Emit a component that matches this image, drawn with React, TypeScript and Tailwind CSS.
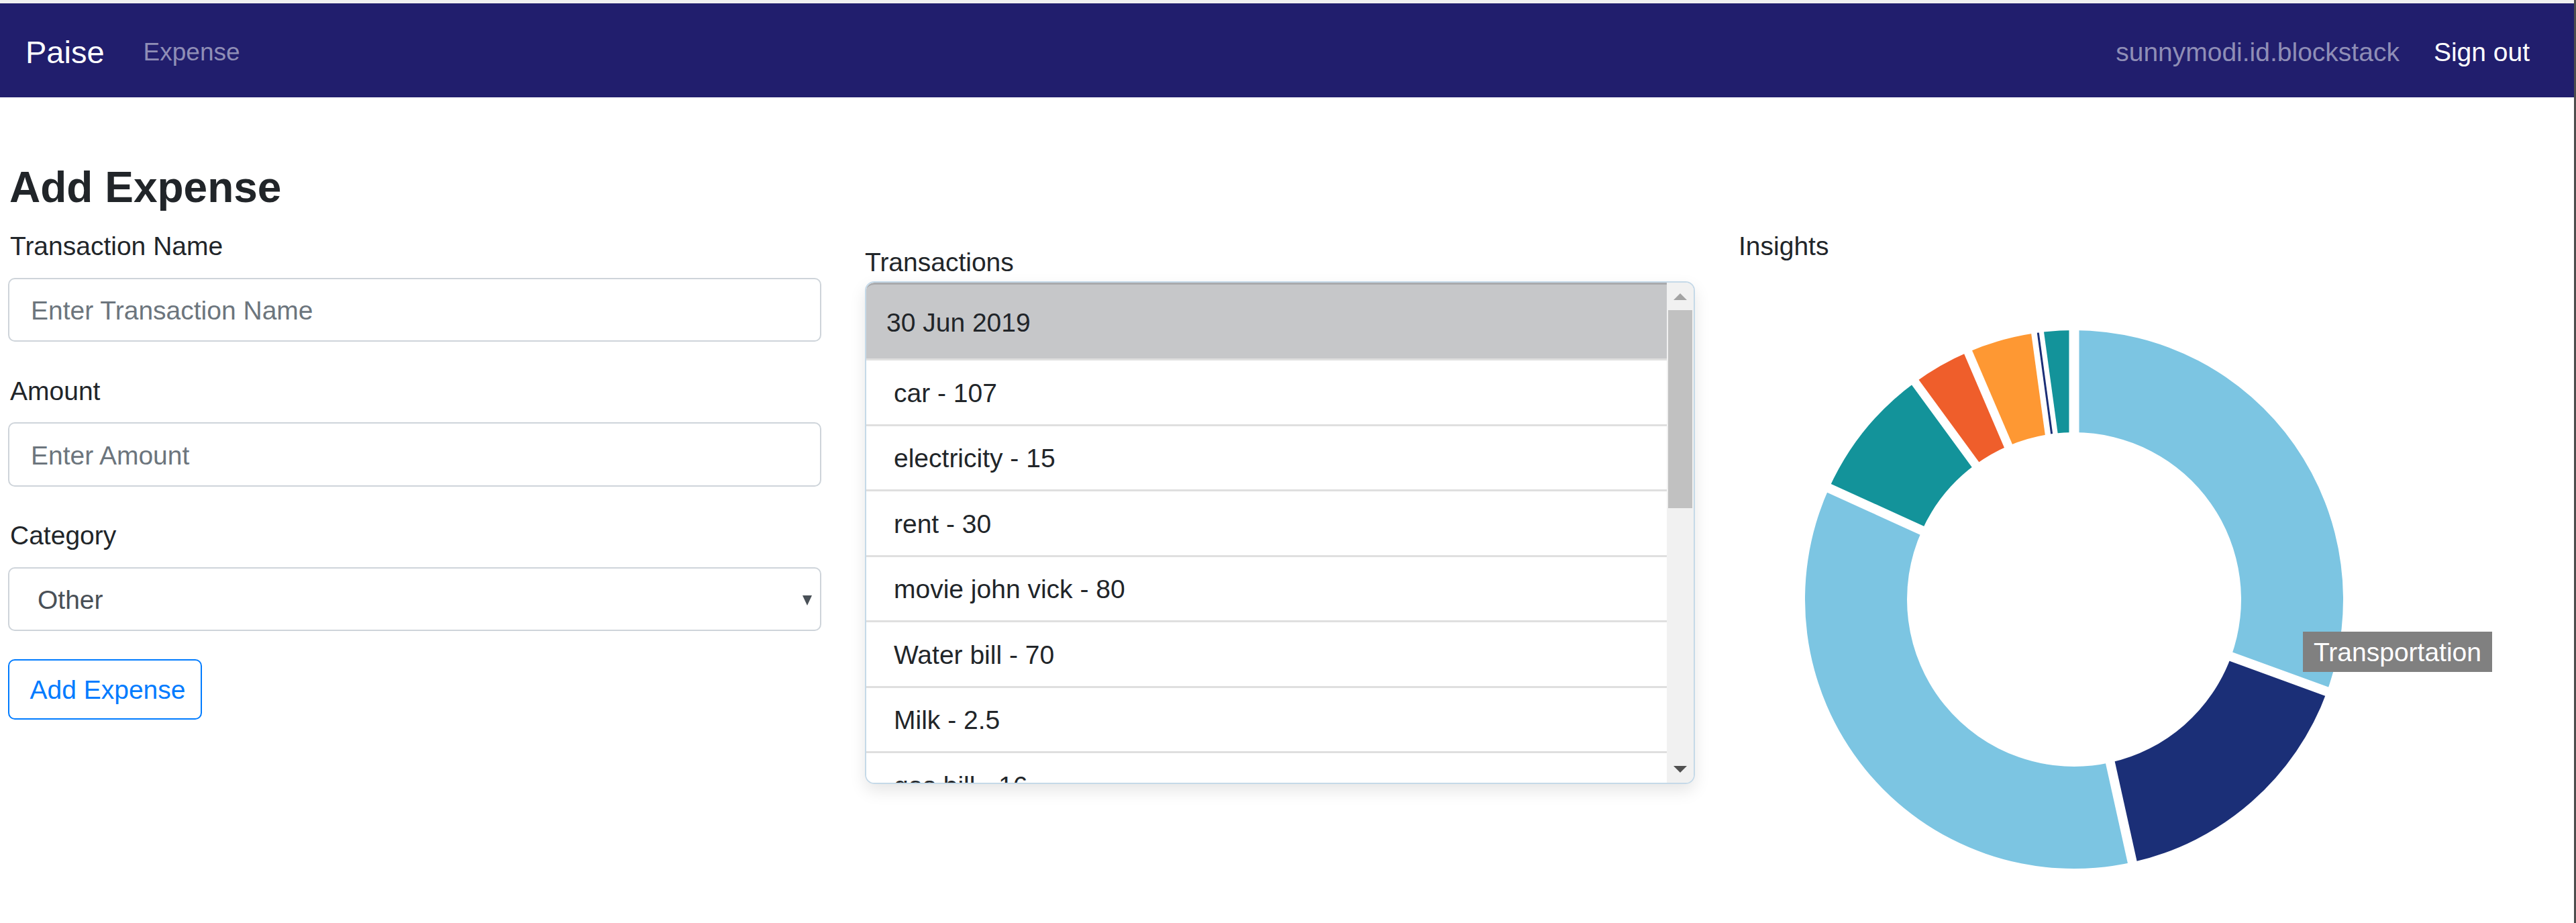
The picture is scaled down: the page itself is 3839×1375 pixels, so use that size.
import React from 'react';

const transactions = [
  'car - 107',
  'electricity - 15',
  'rent - 30',
  'movie john vick - 80',
  'Water bill - 70',
  'Milk - 2.5',
  'gas bill - 16',
];

// degrees, clockwise from 12 o'clock
const slices = [
  { from: 0, to: 110.0, color: '#7cc5e2' },
  { from: 110.0, to: 167.5, color: '#1b2f77' },
  { from: 167.5, to: 294.4, color: '#7cc5e2' },
  { from: 294.4, to: 323.8, color: '#13939a' },
  { from: 323.8, to: 336.8, color: '#ef5e2b' },
  { from: 336.8, to: 351.4, color: '#fe9833' },
  { from: 351.4, to: 353.0, color: '#1b2f77' },
  { from: 353.0, to: 360, color: '#13939a' },
];

const gaps = [
  { at: 0, w: 15 },
  { at: 110.0, w: 14 },
  { at: 167.5, w: 14 },
  { at: 294.4, w: 14 },
  { at: 323.8, w: 13 },
  { at: 336.8, w: 13 },
  { at: 352.2, w: 19 },
];

const C = 410;
const R = 401;
const r = 249;

function pt(angle: number, radius: number) {
  const a = ((angle - 90) * Math.PI) / 180;
  return [C + radius * Math.cos(a), C + radius * Math.sin(a)];
}

function arcPath(from: number, to: number) {
  const large = to - from > 180 ? 1 : 0;
  const [x1, y1] = pt(from, R);
  const [x2, y2] = pt(to, R);
  const [x3, y3] = pt(to, r);
  const [x4, y4] = pt(from, r);
  return `M${x1} ${y1} A${R} ${R} 0 ${large} 1 ${x2} ${y2} L${x3} ${y3} A${r} ${r} 0 ${large} 0 ${x4} ${y4} Z`;
}

function Doughnut() {
  return (
    <svg width={820} height={820} viewBox="0 0 820 820">
      {slices.map((s, i) => (
        <path key={i} d={arcPath(s.from, s.to)} fill={s.color} />
      ))}
      {gaps.map((g, i) => {
        const [x1, y1] = pt(g.at, r - 10);
        const [x2, y2] = pt(g.at, R + 10);
        return <line key={i} x1={x1} y1={y1} x2={x2} y2={y2} stroke="#ffffff" strokeWidth={g.w} />;
      })}
      {(() => {
        const [x1, y1] = pt(352.3, r);
        const [x2, y2] = pt(352.3, R);
        return <line x1={x1} y1={y1} x2={x2} y2={y2} stroke="#1b2f77" strokeWidth={3} />;
      })()}
    </svg>
  );
}

export default function App() {
  return (
    <div className="flex h-[1375px] w-full overflow-hidden bg-white font-['Liberation_Sans',Arial,sans-serif] text-[#212529]">
      <div className="flex min-w-0 flex-1 flex-col">
        <div className="h-[5px] bg-[#f0f0f0]" />
        <nav className="flex h-[140px] items-center bg-[#211e6d] pl-[38px] pr-[66px] pt-[5px]">
          <span className="text-[47px] leading-none text-white">Paise</span>
          <span className="ml-[58px] text-[37px] leading-none text-[#8f8eb6]">Expense</span>
          <div className="ml-auto flex items-center gap-[51px]">
            <span className="text-[39px] leading-none text-[#8f8eb6]">sunnymodi.id.blockstack</span>
            <span className="text-[39px] leading-none text-white">Sign out</span>
          </div>
        </nav>

        <div className="grid grid-cols-[1212px_1237px_1fr] gap-x-[65px] pl-[12px]">
          {/* form column */}
          <div className="flex flex-col">
            <h1 className="mt-[95px] pl-[2px] text-[64px] font-semibold leading-[79px] text-[#212529]">
              Add Expense
            </h1>
            <label className="mt-[19px] pl-[3px] text-[39px] leading-[58px]">Transaction Name</label>
            <input
              className="mt-[18px] h-[95px] w-full rounded-[10px] border-[2.5px] border-[#ced4da] px-[32px] pt-[3px] text-[39px] text-[#495057] outline-none placeholder:text-[#6c757d]"
              placeholder="Enter Transaction Name"
            />
            <label className="mt-[45px] pl-[3px] text-[39px] leading-[58px]">Amount</label>
            <input
              className="mt-[17px] h-[96px] w-full rounded-[10px] border-[2.5px] border-[#ced4da] px-[32px] pt-[3px] text-[39px] text-[#495057] outline-none placeholder:text-[#6c757d]"
              placeholder="Enter Amount"
            />
            <label className="mt-[44px] pl-[3px] text-[39px] leading-[58px]">Category</label>
            <div className="mt-[18px] flex h-[95px] w-full items-center rounded-[10px] border-[2.5px] border-[#ced4da] pl-[42px] pr-[12px] pt-[3px] text-[39px] text-[#495057]">
              <span>Other</span>
              <span className="ml-auto h-0 w-0 border-x-[7px] border-t-[15px] border-x-transparent border-t-[#495057]" />
            </div>
            <button className="mt-[42px] h-[90px] w-[289px] rounded-[10px] border-[2.5px] border-[#007bff] pl-[8px] pt-[3px] text-[39px] text-[#007bff]">
              Add Expense
            </button>
          </div>

          {/* transactions column */}
          <div className="flex flex-col pt-[218px]">
            <div className="text-[39px] leading-[56px]">Transactions</div>
            <div className="flex h-[749px] w-full overflow-hidden rounded-[14px] border-2 border-[#c5d9e8] shadow-[0_10px_24px_rgba(0,0,0,0.10)]">
              <div className="flex min-w-0 flex-1 flex-col overflow-hidden">
                <div className="flex h-[113px] shrink-0 items-center rounded-tl-[12px] border-t-[3px] border-[#a9aaac] bg-[#c6c7c9] pl-[30px] pt-[4px] text-[39px]">
                  30 Jun 2019
                </div>
                {transactions.map((t) => (
                  <div
                    key={t}
                    className="flex h-[97.5px] shrink-0 items-center border-t-[3px] border-[#dfdfdf] bg-white pl-[41px] pt-[3px] text-[39px]"
                  >
                    {t}
                  </div>
                ))}
              </div>
              <div className="flex w-[40px] shrink-0 flex-col bg-[#f1f1f1]">
                <div className="flex h-[41px] items-center justify-center">
                  <span className="h-0 w-0 border-x-[10px] border-b-[10px] border-x-transparent border-b-[#a3a3a3]" />
                </div>
                <div className="mx-[2px] h-[295px] bg-[#c1c1c1]" />
                <div className="flex-1" />
                <div className="flex h-[41px] items-center justify-center">
                  <span className="h-0 w-0 border-x-[10px] border-t-[10px] border-x-transparent border-t-[#505050]" />
                </div>
              </div>
            </div>
          </div>

          {/* insights column */}
          <div className="flex flex-col pt-[193px]">
            <div className="text-[39px] leading-[58px]">Insights</div>
            <div className="relative ml-[90px] mt-[87px] h-[820px] w-[820px]">
              <Doughnut />
              <div className="absolute left-[751px] top-[458px] flex h-[60px] w-[282px] items-center justify-center bg-[#808080] pt-[2px] text-[39px] text-white">
                Transportation
              </div>
            </div>
          </div>
        </div>
      </div>
      <div className="w-[3px] shrink-0 bg-[#4d4d4d]" />
    </div>
  );
}
